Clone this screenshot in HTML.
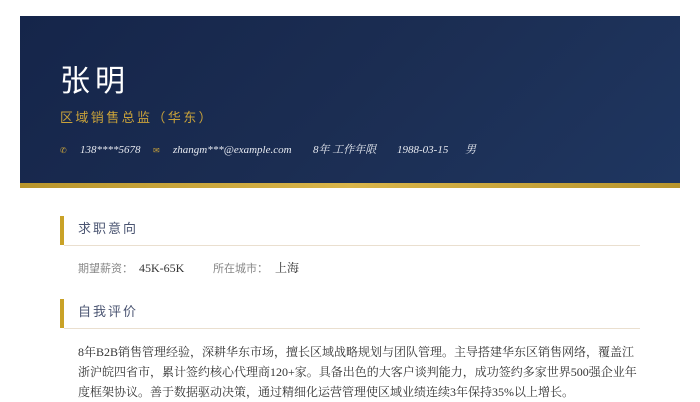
<!DOCTYPE html>
<html><head><meta charset="utf-8"><style>
*{margin:0;padding:0;box-sizing:border-box}
body{width:700px;height:400px;background:#fff;overflow:hidden;font-family:"Liberation Serif","Noto Serif CJK SC",serif;position:relative}
.hd{position:absolute;left:20px;top:16px;width:660px;height:168px;background:linear-gradient(135deg,#15254a 0%,#1b2d52 50%,#1f3660 100%)}
.gold{position:absolute;left:20px;top:183px;width:660px;height:5px;background:linear-gradient(90deg,#b8952c,#d9b54a,#b8952c)}
.name{position:absolute;left:60px;top:58px;color:#fff;font-size:30px;letter-spacing:5px;font-family:"Noto Sans CJK SC",sans-serif;line-height:40px}
.title{position:absolute;left:60px;top:108px;color:#c9a23a;font-size:13px;letter-spacing:2.4px;font-family:"Noto Sans CJK SC",sans-serif;line-height:18px}
.ct{position:absolute;top:143px;color:#e6e9f0;font-size:11px;font-style:italic;line-height:14px;white-space:nowrap}
.ic{color:#c9a23a;font-style:normal;font-size:8px}
.bar{position:absolute;left:60px;width:4px;height:29px;background:#c9a227}
.st{position:absolute;left:78px;color:#4b5572;font-size:13px;letter-spacing:2px;font-family:"Noto Sans CJK SC",sans-serif;line-height:18px}
.ln{position:absolute;left:64px;width:576px;height:1px;background:#eadfcf}
.row{position:absolute;top:260px;font-size:12px;line-height:16px;white-space:nowrap}
.lb{color:#888;font-family:"Noto Sans CJK SC",sans-serif;font-size:11px}
.v{color:#333}
.p{position:absolute;left:78px;top:342px;width:566px;font-size:12px;line-height:20px;color:#333}
</style></head><body>
<div class="hd"></div><div class="gold"></div>
<div class="name">张明</div>
<div class="title">区域销售总监（华东）</div>
<div class="ct" style="left:60px"><span class="ic">✆</span></div>
<div class="ct" style="left:80px">138****5678</div>
<div class="ct" style="left:153px"><span class="ic">✉</span></div>
<div class="ct" style="left:173px">zhangm***@example.com</div>
<div class="ct" style="left:313px">8年 工作年限</div>
<div class="ct" style="left:397px">1988-03-15</div>
<div class="ct" style="left:465px">男</div>
<div class="bar" style="top:216px"></div>
<div class="st" style="top:219px">求职意向</div>
<div class="ln" style="top:245px"></div>
<div class="row" style="left:78px"><span class="lb">期望薪资：</span></div>
<div class="row" style="left:139px"><span class="v">45K-65K</span></div>
<div class="row" style="left:213px"><span class="lb">所在城市：</span></div>
<div class="row" style="left:275px"><span class="v">上海</span></div>
<div class="bar" style="top:299px"></div>
<div class="st" style="top:302px">自我评价</div>
<div class="ln" style="top:328px"></div>
<div class="p">8年B2B销售管理经验，深耕华东市场，擅长区域战略规划与团队管理。主导搭建华东区销售网络，覆盖江浙沪皖四省市，累计签约核心代理商120+家。具备出色的大客户谈判能力，成功签约多家世界500强企业年度框架协议。善于数据驱动决策，通过精细化运营管理使区域业绩连续3年保持35%以上增长。</div>
</body></html>
